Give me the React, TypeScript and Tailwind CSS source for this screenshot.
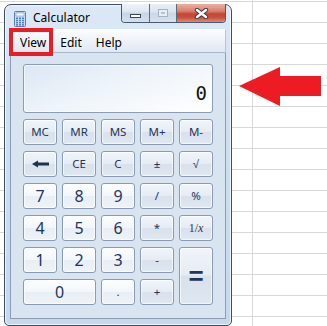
import React from "react";

const fnBtn =
  "bg-[linear-gradient(180deg,#f1f5fa_0%,#e6ecf4_48%,#d8e1ec_50%,#dfe7f1_100%)]";
const numBtn =
  "bg-[linear-gradient(180deg,#fcfdfe_0%,#f3f6fa_48%,#e8eef5_50%,#eff3f8_100%)]";

function CalcIcon() {
  return (
    <svg width="12" height="16" viewBox="0 0 12 16">
      <rect x="0.5" y="0.5" width="11" height="15" rx="1" fill="#c9dcf1" stroke="#5c7ea6" />
      <rect x="2" y="2" width="8" height="3" fill="#f4f9ff" stroke="#7d9cc1" strokeWidth="0.6" />
      {[0, 1, 2].map((c) =>
        [0, 1, 2, 3].map((r) => (
          <rect key={`${c}-${r}`} x={2 + c * 3} y={6.5 + r * 2.2} width="2" height="1.5" fill="#4f7fc0" />
        ))
      )}
    </svg>
  );
}

function BackArrow() {
  return (
    <svg width="17" height="8" viewBox="0 0 17 8">
      <rect x="5" y="2.5" width="12" height="3" fill="#1d3150" />
      <polygon points="0,4 6,0.5 6,7.5" fill="#1d3150" />
    </svg>
  );
}

function Key({
  children,
  num,
  className = "",
}: {
  children: React.ReactNode;
  num?: boolean;
  className?: string;
}) {
  return (
    <div
      className={`flex items-center justify-center rounded-[3px] border border-[#8a9bb1] shadow-[inset_0_0_0_1px_rgba(255,255,255,0.65)] text-[#1f355a] ${
        num ? numBtn : fnBtn
      } ${className}`}
    >
      {children}
    </div>
  );
}

export default function App() {
  const small = "text-[11.5px] font-['Noto_Sans',sans-serif]";
  const digit = "text-[16px] font-['Noto_Sans',sans-serif]";

  return (
    <div className="relative w-[327px] h-[326px] overflow-hidden bg-white bg-[linear-gradient(90deg,transparent_252px,#d8d8d8_252px,#d8d8d8_253px,transparent_253px),repeating-linear-gradient(180deg,transparent_0px,transparent_1px,#d8d8d8_1px,#d8d8d8_2px,transparent_2px,transparent_21px)]">
      {/* calculator window */}
      <div className="absolute left-[4px] top-[4px] w-[228px] h-[322px] flex flex-col rounded-t-[7px] rounded-b-[5px] border border-[#3d4c5f] bg-[linear-gradient(180deg,#dce8f5_0%,#cfe0f2_30%,#c4d8ee_100%)] shadow-[inset_0_0_0_1px_rgba(255,255,255,0.7)]">
        {/* title bar */}
        <div className="h-[24px] flex items-start shrink-0">
          <div className="pl-[9px] pt-[6px]">
            <CalcIcon />
          </div>
          <span className="ml-[7px] mt-[4px] text-[12px] text-black font-['Noto_Sans',sans-serif]">
            Calculator
          </span>
          <div className="ml-auto mr-[5px] -mt-px flex h-[19px] rounded-b-[4px] border border-t-0 border-[#4a5a6e] overflow-hidden">
            <div className="w-[28px] flex items-end justify-center pb-[4px] border-r border-[#5a6b80] bg-[linear-gradient(180deg,#eef3f9_0%,#dce6f1_45%,#c5d4e5_50%,#d3e0ee_100%)]">
              <div className="w-[11px] h-[4px] bg-white border border-[#3a4657]" />
            </div>
            <div className="w-[27px] flex items-center justify-center border-r border-[#5a6b80] bg-[linear-gradient(180deg,#e9eff6_0%,#dbe4ee_45%,#cad7e5_50%,#d6e1ec_100%)]">
              <div className="w-[10px] h-[8px] border border-[#a3b2c4] bg-[#e6edf5] flex items-center justify-center">
                <div className="w-[4px] h-[2px] border border-[#b6c3d2]" />
              </div>
            </div>
            <div className="w-[48px] flex items-center justify-center bg-[linear-gradient(180deg,#ebb0a2_0%,#d9806f_40%,#c44633_55%,#c9503c_75%,#dc8a78_100%)]">
              <svg width="15" height="11" viewBox="0 0 15 11">
                <path d="M3 2 L12 9 M12 2 L3 9" stroke="#3b3b45" strokeWidth="4.4" strokeLinecap="round" />
                <path d="M3 2 L12 9 M12 2 L3 9" stroke="#ffffff" strokeWidth="2.4" strokeLinecap="round" />
              </svg>
            </div>
          </div>
        </div>

        <div className="flex-1 flex flex-col pl-[5px] pr-[5px] pb-[6px]">
          {/* menu bar */}
          <div className="h-[24px] shrink-0 flex items-end pb-[1px] pl-[9px] gap-[14px] border-x border-b border-t border-x-[#b7c5d6] border-b-[#a7b6c9] border-t-white bg-[linear-gradient(180deg,#fbfcfe_0%,#eef2f8_50%,#e1e8f2_100%)] text-[12px] leading-[16px] text-black font-['Noto_Sans',sans-serif]">
            <span>View</span>
            <span>Edit</span>
            <span>Help</span>
          </div>

          {/* client */}
          <div className="flex-1 flex flex-col px-[12px] pt-[11px] border-x border-b border-[#8d9cb0] bg-[#d9e4f1]">
            <div className="h-[49px] flex items-end justify-end pr-[5px] pb-[9px] rounded-[3px] border border-[#8c9db2] bg-[linear-gradient(160deg,#dce7f4_0%,#eef4fa_45%,#ffffff_100%)] shadow-[inset_0_0_0_1px_rgba(255,255,255,0.6)]">
              <span className="text-[19px] leading-none text-[#111] font-['DejaVu_Sans_Mono',monospace] slashed-zero">
                0
              </span>
            </div>

            <div className="mt-[6px] grid grid-cols-[repeat(5,34px)] auto-rows-[26px] gap-x-[5px] gap-y-[6px]">
              <Key className={small}>MC</Key>
              <Key className={small}>MR</Key>
              <Key className={small}>MS</Key>
              <Key className={small}>M+</Key>
              <Key className={small}>M-</Key>

              <Key>
                <BackArrow />
              </Key>
              <Key className={small}>CE</Key>
              <Key className={small}>C</Key>
              <Key className={small}>±</Key>
              <Key className={small}>√</Key>

              <Key num className={digit}>7</Key>
              <Key num className={digit}>8</Key>
              <Key num className={digit}>9</Key>
              <Key className={small}>/</Key>
              <Key className={small}>%</Key>

              <Key num className={digit}>4</Key>
              <Key num className={digit}>5</Key>
              <Key num className={digit}>6</Key>
              <Key className={small}>*</Key>
              <Key className="text-[12px] font-['Liberation_Serif',serif]">
                1/<i>x</i>
              </Key>

              <Key num className={digit}>1</Key>
              <Key num className={digit}>2</Key>
              <Key num className={digit}>3</Key>
              <Key className={small}>-</Key>
              <Key className="row-span-2 text-[26px] font-bold font-['Liberation_Sans',sans-serif]">=</Key>

              <Key num className={`col-span-2 ${digit}`}>0</Key>
              <Key num className={small}>.</Key>
              <Key className={small}>+</Key>
            </div>
          </div>
        </div>
      </div>

      {/* highlight around View */}
      <div className="absolute left-[9px] top-[28px] w-[44px] h-[28px] border-4 border-[#ed1c24]" />

      {/* pointer arrow */}
      <svg className="absolute left-[239px] top-[67px]" width="83" height="40" viewBox="0 0 83 40">
        <polygon points="0,19 41,0 41,9 82,9 82,29 41,29 41,39" fill="#ed1c24" />
      </svg>
    </div>
  );
}
